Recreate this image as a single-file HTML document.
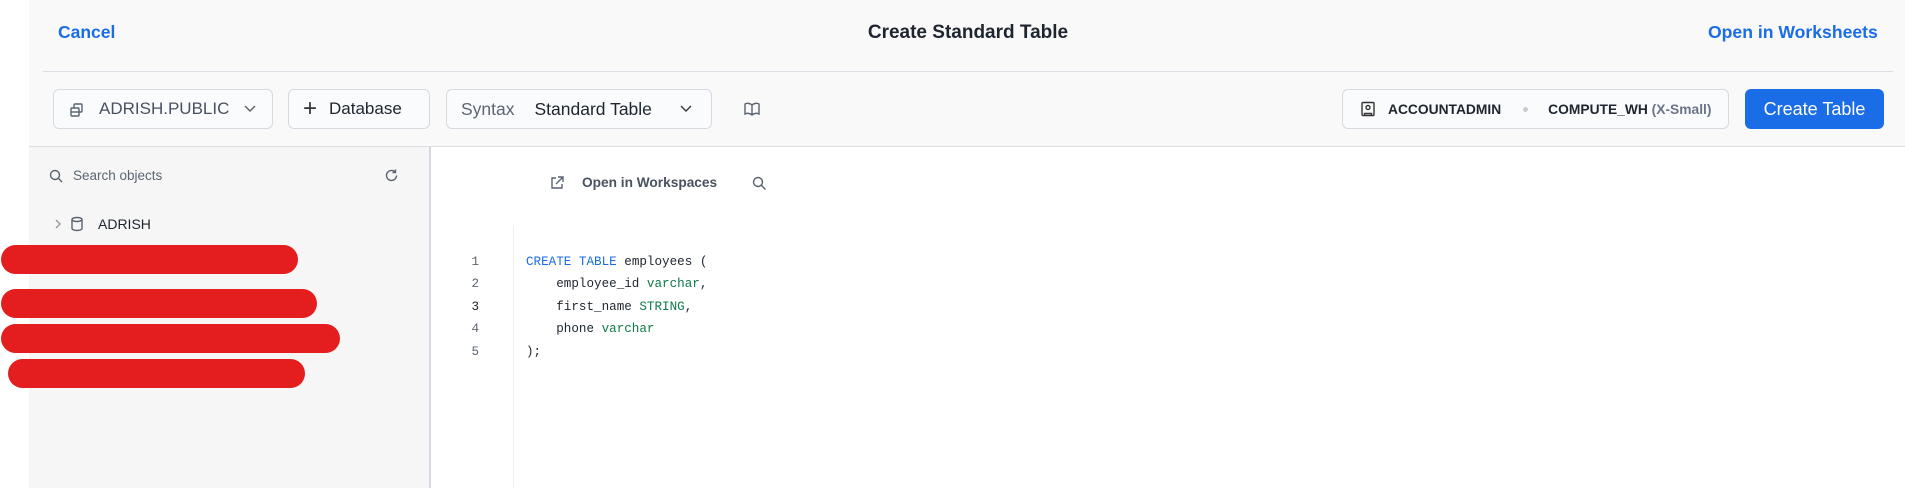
<!DOCTYPE html>
<html><head><meta charset="utf-8"><style>
*{margin:0;padding:0;box-sizing:border-box}
body{width:1905px;height:488px;overflow:hidden;background:#fff;font-family:"Liberation Sans",sans-serif;position:relative;color:#1e252f}
.a{position:absolute}
.hdr{left:29px;top:0;width:1876px;height:146px;background:#f9f9fa}
.btn{position:absolute;top:89px;height:40px;border:1px solid #d6d9e0;border-radius:6px;background:#fafbfc;display:flex;align-items:center;font-size:17px;white-space:nowrap}
.mono{font-family:"Liberation Mono",monospace;font-size:12.6px;white-space:pre;line-height:22.4px}
.red{position:absolute;background:#e41e1f;border-radius:15px}
svg{position:absolute;fill:none;stroke:#5a6270;stroke-width:1.4}
</style></head><body>
<div class="a hdr"></div>
<div class="a" style="left:58px;top:22px;font-size:17.5px;font-weight:bold;color:#1a6ce7">Cancel</div>
<div class="a" style="left:0;width:1936px;top:22px;text-align:center;font-size:19px;font-weight:bold;color:#1e252f">Create Standard Table</div>
<div class="a" style="left:1708px;top:22px;font-size:17.6px;font-weight:bold;color:#1a6ce7">Open in Worksheets</div>
<div class="a" style="left:43px;top:71px;width:1850px;height:1px;background:#dcdfe6"></div>

<div class="btn" style="left:53px;width:220px"><svg style="left:15px;top:12px" width="16" height="16" viewBox="0 0 16 16"><rect x="2" y="6" width="8" height="8" rx="1"/><path d="M5 6V3a1 1 0 0 1 1-1h6a1 1 0 0 1 1 1v6a1 1 0 0 1-1 1h-2"/><path d="M2 10h8"/></svg><span style="margin-left:45px;color:#4a5160">ADRISH.PUBLIC</span><svg style="left:189px;top:14px" width="14" height="10" viewBox="0 0 14 10"><path d="M2 2l5 5 5-5"/></svg></div>
<div class="btn" style="left:288px;width:142px"><span style="margin-left:14px;font-size:24px;font-weight:300;color:#333;line-height:20px">+</span><span style="margin-left:12px">Database</span></div>
<div class="btn" style="left:446px;width:266px;font-size:17.5px"><span style="margin-left:14px;color:#5d6574">Syntax</span><span style="margin-left:20px">Standard Table</span><svg style="left:232px;top:14px" width="14" height="10" viewBox="0 0 14 10" ><path d="M2 2l5 5 5-5" stroke="#333"/></svg></div>
<svg style="left:743px;top:101px" width="18" height="16" viewBox="0 0 18 16"><path d="M2 3c2-1 5-1 7 1 2-2 5-2 7-1v10c-2-1-5-1-7 1-2-2-5-2-7-1z M9 4v10"/></svg>

<div class="btn" style="left:1342px;width:387px;font-size:13.8px;font-weight:bold"><svg style="left:17px;top:11px" width="16" height="16" viewBox="0 0 16 16"><rect x="2" y="1.5" width="12" height="13" rx="1" stroke="#333"/><circle cx="8" cy="6.5" r="2" stroke="#333"/><path d="M4.5 14.5v-2h7v2" stroke="#333"/></svg><span style="margin-left:45px">ACCOUNTADMIN</span><span style="margin-left:22px;width:5px;height:5px;border-radius:50%;background:#c8ccd4;display:inline-block"></span><span style="margin-left:20px">COMPUTE_WH <span style="color:#6b7387">(X-Small)</span></span></div>
<div class="a" style="left:1745px;top:89px;width:139px;height:40px;border-radius:6px;background:#1a6ce7;color:#fff;font-size:18px;text-align:center;line-height:40px">Create Table</div>
<div class="a" style="left:29px;top:146px;width:1876px;height:1px;background:#dcdfe6"></div>

<div class="a" style="left:29px;top:147px;width:400px;height:341px;background:#f6f6f6"></div>
<div class="a" style="left:429px;top:147px;width:2px;height:341px;background:#d6d9e2"></div>
<svg style="left:49px;top:169px" width="14" height="14" viewBox="0 0 14 14"><circle cx="6" cy="6" r="4.5"/><path d="M9.3 9.3L13 13"/></svg>
<div class="a" style="left:73px;top:168px;font-size:13.5px;color:#5d6574">Search objects</div>
<svg style="left:384px;top:168px" width="15" height="15" viewBox="0 0 15 15"><path d="M12.5 7.5a5 5 0 1 1-1.5-3.6M11.5 1.5v3h-3"/></svg>
<svg style="left:54px;top:218px" width="8" height="12" viewBox="0 0 8 12"><path d="M2 2l4 4-4 4" stroke="#999"/></svg>
<svg style="left:70px;top:216px" width="14" height="16" viewBox="0 0 14 16"><ellipse cx="7" cy="3.5" rx="5" ry="2"/><path d="M2 3.5v9c0 1.1 2.2 2 5 2s5-.9 5-2v-9"/></svg>
<div class="a" style="left:98px;top:216px;font-size:14px;color:#1e252f">ADRISH</div>
<div class="red" style="left:1px;top:245px;width:297px;height:29px"></div>
<div class="red" style="left:1px;top:289px;width:316px;height:29px"></div>
<div class="red" style="left:1px;top:324px;width:339px;height:29px"></div>
<div class="red" style="left:8px;top:359px;width:297px;height:29px"></div>

<svg style="left:549px;top:175px" width="16" height="16" viewBox="0 0 16 16"><path d="M7 3H3v10h10V9M9 2h5v5M14 2L7 9"/></svg>
<div class="a" style="left:582px;top:175px;font-size:13.7px;font-weight:bold;color:#4a5160">Open in Workspaces</div>
<svg style="left:752px;top:176px" width="15" height="15" viewBox="0 0 15 15"><circle cx="6" cy="6" r="4.5"/><path d="M9.3 9.3L13.5 13.5"/></svg>
<div class="a" style="left:513px;top:225px;width:1px;height:263px;background:#f0f0f2"></div>
<div class="a mono" style="left:469px;top:251px;color:#5d6574;text-align:right;width:10px">1
2
<span style="color:#222">3</span>
4
5</div>
<div class="a mono" style="left:526px;top:251px;color:#1e252f"><span style="color:#1a6ce7">CREATE TABLE</span> employees (
    employee_id <span style="color:#0f7a4a">varchar</span>,
    first_name <span style="color:#0f7a4a">STRING</span>,
    phone <span style="color:#0f7a4a">varchar</span>
);</div>
</body></html>
